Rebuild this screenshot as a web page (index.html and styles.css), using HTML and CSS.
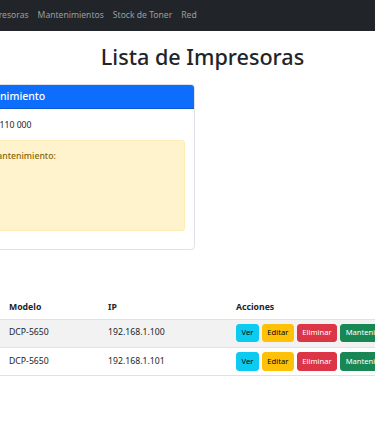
FILE: index.html
```html
<!DOCTYPE html>
<html lang="es">
<head>
  <meta charset="UTF-8">
  <title>Lista de Impresoras</title>
  <link rel="stylesheet" href="styles.css">
</head>
<body>
<div class="page">

  <nav class="navbar">
    <ul class="nav-links">
      <li><a href="#">Impresoras</a></li>
      <li><a href="#">Mantenimientos</a></li>
      <li><a href="#">Stock de Toner</a></li>
      <li><a href="#">Red</a></li>
    </ul>
  </nav>

  <main class="content">
    <h1>Lista de Impresoras</h1>

    <div class="card">
      <div class="card-header">Próximo Mantenimiento</div>
      <div class="card-body">
        <p>Páginas impresas: 110 000</p>
        <div class="alert">
          <strong>Fecha último mantenimiento:</strong>
        </div>
      </div>
    </div>

    <table class="table">
      <colgroup>
        <col class="col-id">
        <col class="col-marca">
        <col class="col-modelo">
        <col class="col-ip">
        <col>
      </colgroup>
      <thead>
        <tr>
          <th>#</th>
          <th>Marca</th>
          <th>Modelo</th>
          <th>IP</th>
          <th>Acciones</th>
        </tr>
      </thead>
      <tbody>
        <tr>
          <td>1</td>
          <td>Brother</td>
          <td>DCP-5650</td>
          <td>192.168.1.100</td>
          <td>
            <div class="actions">
              <a href="#" class="btn btn-info">Ver</a>
              <a href="#" class="btn btn-warning">Editar</a>
              <a href="#" class="btn btn-danger">Eliminar</a>
              <a href="#" class="btn btn-success">Mantenimiento</a>
            </div>
          </td>
        </tr>
        <tr>
          <td>2</td>
          <td>Brother</td>
          <td>DCP-5650</td>
          <td>192.168.1.101</td>
          <td>
            <div class="actions">
              <a href="#" class="btn btn-info">Ver</a>
              <a href="#" class="btn btn-warning">Editar</a>
              <a href="#" class="btn btn-danger">Eliminar</a>
              <a href="#" class="btn btn-success">Mantenimiento</a>
            </div>
          </td>
        </tr>
      </tbody>
    </table>
  </main>

</div>
</body>
</html>
```
FILE: styles.css
```css
body {
  margin: 0;
  font-family: 'Noto Sans', 'Open Sans', sans-serif;
  font-size: 8.7px;
  line-height: 13.5px;
  color: #212529;
  background: #fff;
}

/* the page is scrolled sideways: left part is out of view */
.page {
  overflow: hidden;
  min-height: 437px;
}

.navbar {
  background-color: #212529;
  height: 31px;
  display: flex;
  align-items: center;
}

.nav-links {
  display: flex;
  list-style: none;
  margin: 0 0 0 -22px;
  padding: 0;
}

.nav-links a {
  display: block;
  padding: 4.5px;
  font-size: 8.6px;
  color: rgba(255, 255, 255, 0.55);
  text-decoration: none;
}

.content {
  margin-left: -160px;
  width: 725px;
}

h1 {
  text-align: center;
  font-size: 21.6px;
  font-weight: 500;
  line-height: 26px;
  margin: 12.5px 0 14.5px;
  color: #212529;
}

.card {
  margin-left: 73.3px;
  width: 281.7px;
  border: 1px solid #dee2e6;
  border-radius: 4px;
  overflow: hidden;
  box-sizing: border-box;
}

.card-header {
  background-color: #0d6efd;
  color: #fff;
  font-size: 10.5px;
  font-weight: 500;
  line-height: 13.5px;
  padding: 4.5px 9px;
  border-bottom: 1px solid rgba(0, 0, 0, 0.175);
}

.card-body {
  padding: 10px 9px 9px;
}

.card-body p {
  margin: 0 0 8px;
}

.alert {
  background-color: #fff3cd;
  border: 1px solid #ffecb5;
  color: #856404;
  border-radius: 3px;
  padding: 9px;
  min-height: 91px;
  box-sizing: border-box;
  margin-bottom: 9px;
}

.alert strong {
  font-weight: 500;
}

.table {
  width: 100%;
  table-layout: fixed;
  border-collapse: collapse;
  margin-top: 46px;
}

.col-id { width: 40px; }
.col-marca { width: 124.5px; }
.col-modelo { width: 99px; }
.col-ip { width: 128px; }

.table th,
.table td {
  text-align: left;
  padding: 4.5px;
  border-bottom: 1px solid #dee2e6;
  vertical-align: middle;
  white-space: nowrap;
}

.table th {
  font-weight: 700;
}

.table tbody tr:nth-child(odd) {
  background-color: #f2f2f2;
}

.actions {
  display: flex;
  gap: 3px;
}

.btn {
  display: inline-block;
  font-size: 7.6px;
  line-height: 11.8px;
  padding: 2.25px 4.5px;
  border: 1px solid transparent;
  border-radius: 3px;
  text-decoration: none;
}

.btn-info {
  background-color: #0dcaf0;
  border-color: #0dcaf0;
  color: #000;
}

.btn-warning {
  background-color: #ffc107;
  border-color: #ffc107;
  color: #000;
}

.btn-danger {
  background-color: #dc3545;
  border-color: #dc3545;
  color: #fff;
}

.btn-success {
  background-color: #198754;
  border-color: #198754;
  color: #fff;
}
```
